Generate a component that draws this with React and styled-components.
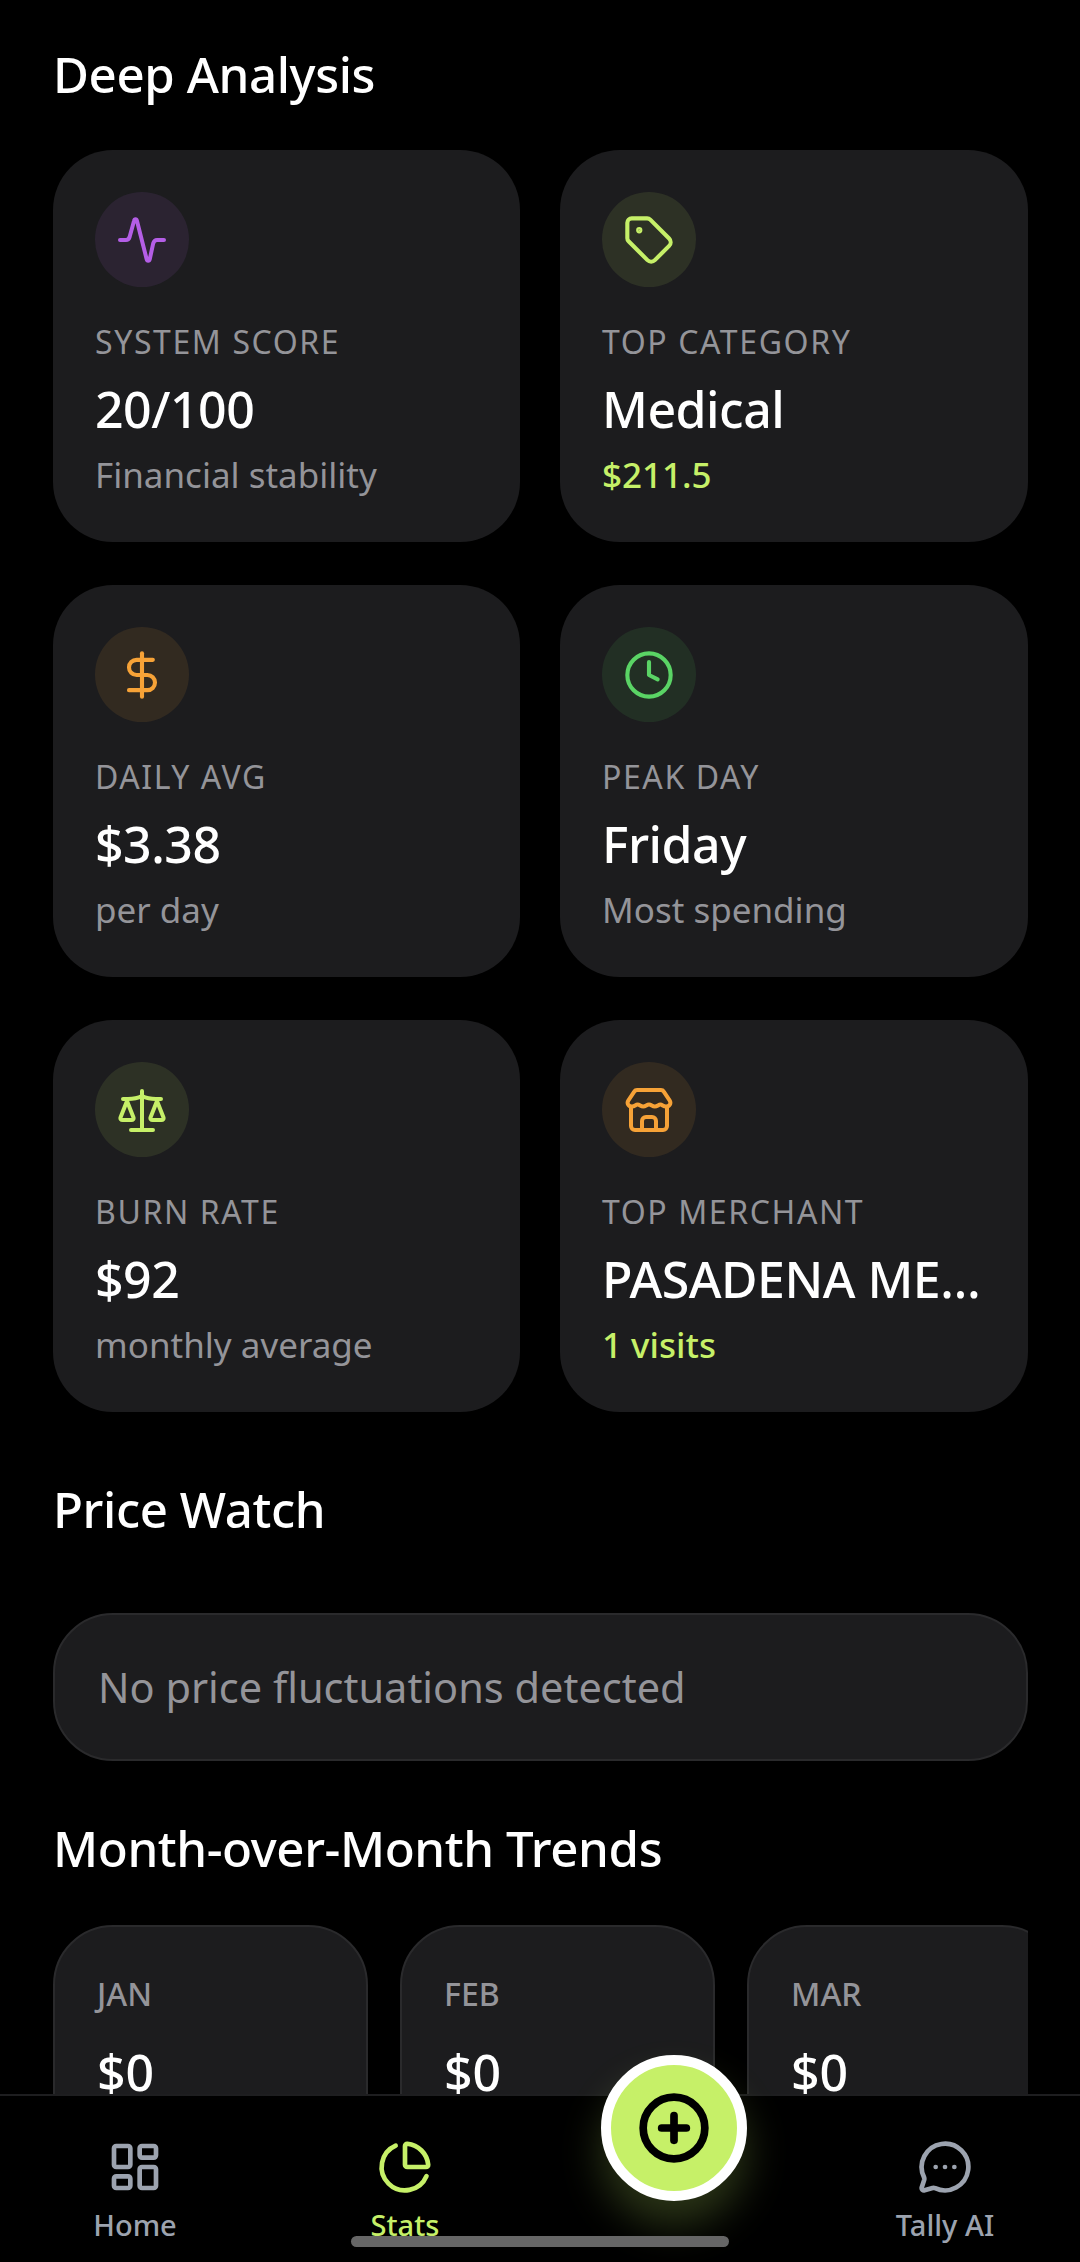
import React from 'react';
import styled, { createGlobalStyle } from 'styled-components';
import { Tag, DollarSign, Clock, LayoutDashboard, ChartPie, CirclePlus, MessageCircleMore } from 'lucide-react';

const LIME = '#c6f068';
const ORANGE = '#f6a237';
const GREEN = '#5ad465';
const PURPLE = '#b45ee6';

const GlobalStyle = createGlobalStyle`
  html, body {
    margin: 0;
    padding: 0;
    background: #000;
  }
  * {
    box-sizing: border-box;
  }
`;

const Screen = styled.div`
  position: relative;
  width: 1080px;
  height: 2262px;
  display: flex;
  flex-direction: column;
  overflow: hidden;
  background: #000;
  color: #fff;
  font-family: "Noto Sans", "Open Sans", sans-serif;
`;
const Scroll = styled.div`
  flex: 1;
  min-height: 0;
  overflow: hidden;
  padding: 39px 52px 0 53px;
`;
const SectionTitle = styled.h2`
  margin: 0 0 ${props => props.$gap}px;
  font-size: 49.2px;
  line-height: 70px;
  font-weight: 500;
  letter-spacing: -0.4px;
`;
const StatGrid = styled.div`
  display: grid;
  grid-template-columns: 467px 468px;
  column-gap: 40px;
  row-gap: 43px;
  margin-bottom: 62px;
`;
const StatCard = styled.div`
  height: 392px;
  min-width: 0;
  padding: 42px 42px 0;
  border-radius: 60px;
  background: #1c1c1e;
`;
const IconBadge = styled.div`
  width: 94px;
  height: 95px;
  border-radius: 50%;
  display: flex;
  align-items: center;
  justify-content: center;
  color: ${props => props.$color};
  background: ${props => props.$color}1a;
  margin-bottom: 33px;
`;
const StatLabel = styled.div`
  font-size: 32px;
  line-height: 44px;
  letter-spacing: 1.6px;
  color: #949499;
`;
const StatValue = styled.div`
  margin-top: 11px;
  font-size: 50px;
  line-height: 68px;
  font-weight: 500;
  white-space: nowrap;
  overflow: hidden;
  text-overflow: ellipsis;
  letter-spacing: -0.5px;
`;
const StatSub = styled.div`
  margin-top: 8px;
  font-size: 35px;
  line-height: 48px;
  font-weight: ${props => (props.$accent ? 500 : 400)};
  color: ${props => (props.$accent ? LIME : '#949499')};
`;
const EmptyBox = styled.div`
  height: 148px;
  margin: 0 0 52px;
  padding: 0 43px;
  display: flex;
  align-items: center;
  border: 2px solid #2a2a2c;
  border-radius: 60px;
  background: #1c1c1e;
  font-size: 41.5px;
  color: #949499;
`;
const MonthRow = styled.div`
  display: flex;
  gap: 32px;
  overflow: hidden;
`;
const MonthCard = styled.div`
  flex: 0 0 315px;
  height: 300px;
  padding: 45px 42px 0;
  border: 2px solid #2a2a2c;
  border-radius: 60px;
  background: #1c1c1e;
`;
const MonthLabel = styled.div`
  font-size: 32px;
  line-height: 44px;
  font-weight: 500;
  color: #949499;
`;
const MonthValue = styled.div`
  margin-top: 23px;
  font-size: 50px;
  line-height: 66px;
  font-weight: 500;
`;
const Nav = styled.nav`
  flex: 0 0 168px;
  display: grid;
  grid-template-columns: repeat(4, 1fr);
  border-top: 2px solid #1e1e20;
  background: #000;
`;
const NavItem = styled.div`
  position: relative;
  display: flex;
  flex-direction: column;
  align-items: center;
  padding-top: 43px;
  color: ${props => (props.$active ? LIME : '#9ca3af')};
`;
const NavLabel = styled.span`
  margin-top: 8px;
  font-size: 29px;
  line-height: 44px;
  font-weight: 500;
`;
const Fab = styled.div`
  position: absolute;
  top: -41px;
  left: calc(50% - 1px);
  transform: translateX(-50%);
  width: 146px;
  height: 146px;
  border-radius: 50%;
  border: 10px solid #fff;
  background: ${LIME};
  color: #000;
  display: flex;
  align-items: center;
  justify-content: center;
  box-shadow: 0 24px 40px rgba(198, 240, 104, 0.22);
`;
const HomeBar = styled.div`
  position: absolute;
  left: 351px;
  bottom: 15px;
  width: 378px;
  height: 11px;
  border-radius: 6px;
  background: #666;
`;

const Pulse = () => (
  <svg width="48" height="48" viewBox="0 0 24 24" fill="none" stroke="currentColor" strokeWidth="2" strokeLinecap="round" strokeLinejoin="round">
    <path d="M1 12h3c1 0 1.500-.6 1.800-1.500L8 2.500c.3-1.200 1.200-1.200 1.500 0l4.800 19c.3 1.200 1.300 1.200 1.600 0l1.700-7.800c.3-1 .8-1.700 1.900-1.700H23" />
  </svg>
);
const Balance = () => (
  <svg width="48" height="48" viewBox="0 0 24 24" fill="none" stroke="currentColor" strokeWidth="2" strokeLinecap="round" strokeLinejoin="round">
    <path d="M12 2.500V22M6.500 22h11" />
    <path d="M2.500 6.500H5c2.600 0 5-.5 7-1.500 2 1 4.400 1.500 7 1.500h2.500" />
    <path d="M4.500 7.500 1.300 15.600c-.3.800.2 1.400 1 1.400h4.400c.8 0 1.300-.6 1-1.400z" />
    <path d="M19.500 7.500l-3.200 8.100c-.3.800.2 1.400 1 1.400h4.400c.8 0 1.300-.6 1-1.400z" />
  </svg>
);
const Shop = () => (
  <svg width="48" height="48" viewBox="0 0 24 24" fill="none" stroke="currentColor" strokeWidth="2" strokeLinecap="round" strokeLinejoin="round">
    <path d="M6 2h12c.6 0 1 .2 1.300.7l3 4.500c1 1.500-.1 3.100-1.800 3.100-1.400 0-1.800-1-2.800-1s-1.500 1-2.800 1-1.700-1-2.900-1-1.600 1-2.900 1-1.700-1-2.800-1-1.400 1-2.800 1c-1.700 0-2.800-1.600-1.800-3.100l3-4.500C5 2.200 5.400 2 6 2z" />
    <path d="M3 10.500V20a2 2 0 0 0 2 2h14a2 2 0 0 0 2-2v-9.500" />
    <path d="M8.500 22v-4.500a2 2 0 0 1 2-2h3a2 2 0 0 1 2 2V22" />
  </svg>
);

const stats = [
  { icon: <Pulse />, color: PURPLE, label: 'SYSTEM SCORE', value: '20/100', sub: 'Financial stability' },
  { icon: <Tag size={52} strokeWidth={1.9} />, color: LIME, label: 'TOP CATEGORY', value: 'Medical', sub: '$211.5', accent: true },
  { icon: <DollarSign size={52} strokeWidth={1.9} />, color: ORANGE, label: 'DAILY AVG', value: '$3.38', sub: 'per day' },
  { icon: <Clock size={52} strokeWidth={1.9} />, color: GREEN, label: 'PEAK DAY', value: 'Friday', sub: 'Most spending' },
  { icon: <Balance />, color: LIME, label: 'BURN RATE', value: '$92', sub: 'monthly average' },
  { icon: <Shop />, color: ORANGE, label: 'TOP MERCHANT', value: 'PASADENA MEDICAL', sub: '1 visits', accent: true },
];
const months = ['JAN', 'FEB', 'MAR'];

const App = () => {
  return (
    <Screen>
      <GlobalStyle />
      <Scroll>
        <SectionTitle $gap={41}>Deep Analysis</SectionTitle>
        <StatGrid>
          {stats.map(s => (
            <StatCard key={s.label}>
              <IconBadge $color={s.color}>{s.icon}</IconBadge>
              <StatLabel>{s.label}</StatLabel>
              <StatValue>{s.value}</StatValue>
              <StatSub $accent={s.accent}>{s.sub}</StatSub>
            </StatCard>
          ))}
        </StatGrid>
        <SectionTitle $gap={69}>Price Watch</SectionTitle>
        <EmptyBox>No price fluctuations detected</EmptyBox>
        <SectionTitle $gap={42}>Month-over-Month Trends</SectionTitle>
        <MonthRow>
          {months.map(m => (
            <MonthCard key={m}>
              <MonthLabel>{m}</MonthLabel>
              <MonthValue>$0</MonthValue>
            </MonthCard>
          ))}
        </MonthRow>
      </Scroll>
      <Nav>
        <NavItem>
          <LayoutDashboard size={56} />
          <NavLabel>Home</NavLabel>
        </NavItem>
        <NavItem $active>
          <ChartPie size={56} />
          <NavLabel>Stats</NavLabel>
        </NavItem>
        <NavItem>
          <Fab>
            <CirclePlus size={74} strokeWidth={2.5} />
          </Fab>
        </NavItem>
        <NavItem>
          <MessageCircleMore size={56} />
          <NavLabel>Tally AI</NavLabel>
        </NavItem>
      </Nav>
      <HomeBar />
    </Screen>
  );
};

export default App;
